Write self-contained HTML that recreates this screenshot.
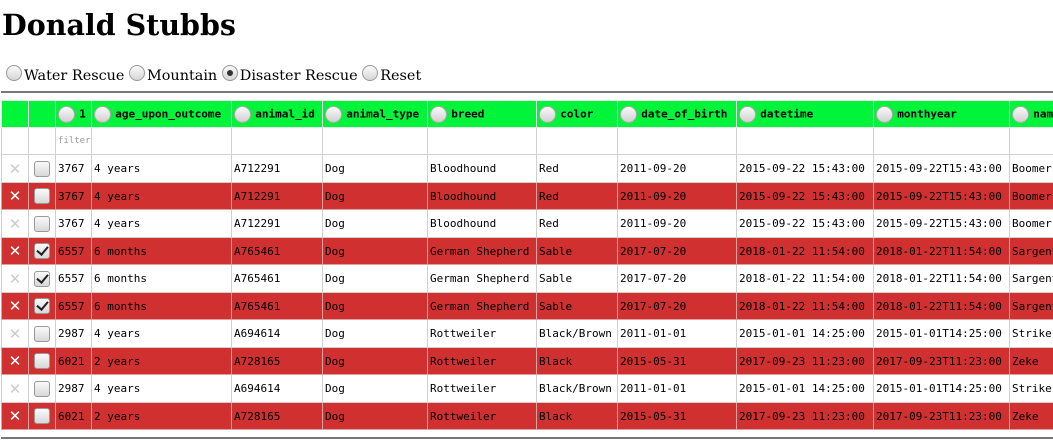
<!DOCTYPE html>
<html><head><style>
body{margin:0;background:#fff;width:1053px;height:447px;overflow:hidden;position:relative;font-family:"DejaVu Serif","Liberation Serif",serif}
h1{position:absolute;left:2px;top:8px;margin:0;font-size:28.5px;font-weight:bold;font-family:"DejaVu Serif",serif;color:#000}
.radios{position:absolute;left:6px;top:65px;font-size:14.4px;font-family:"DejaVu Serif",serif;white-space:nowrap}
.rb{display:inline-block;width:14px;height:14px;border-radius:50%;border:1px solid #999;background:linear-gradient(#fafafa,#d6d6d6);vertical-align:-1px;margin-right:2px;position:relative}
.rb.on::after{content:"";position:absolute;left:4px;top:4px;width:6px;height:6px;border-radius:50%;background:#333}
.hr{position:absolute;left:1px;width:1052px;height:2px;background:#777}
table{position:absolute;left:1px;top:100px;width:1068px;border-collapse:collapse;table-layout:fixed;font-family:"DejaVu Sans Mono","Liberation Mono",monospace;font-size:11px;color:#000}
td{border:1px solid #d0d0d0;padding:0 0 0 2px;white-space:nowrap;overflow:hidden;height:26px}
tr.h td{background:#00f53a;font-weight:bold;height:26px;border-color:#e8e8e8}
tr.r td{background:#d03030;border-color:#e0a0a0}
tr.a td{height:27px}
.x{color:#ccc;font-family:"DejaVu Sans",sans-serif;font-size:15px;text-align:center;padding:0}
tr.r .x{color:#fff}
.cb{display:inline-block;width:14px;height:14px;border:1px solid #999;border-radius:3px;background:linear-gradient(#fafafa,#d8d8d8);position:relative;vertical-align:middle}
.cb.on::after{content:"";position:absolute;left:4px;top:0px;width:5px;height:9px;border:solid #222;border-width:0 2.5px 2.5px 0;transform:rotate(40deg)}
.c{text-align:center;padding:0}
.hd .ci{display:inline-block;width:15px;height:15px;border-radius:50%;border:1px solid #aaa;background:linear-gradient(#fafafa,#d0d0d0);vertical-align:middle}
.hd .ar{color:#999;font-size:7px;vertical-align:4px}
.f{color:#999;font-size:9px}
</style></head><body>
<h1>Donald Stubbs</h1>
<div class="radios"><span class="rb"></span>Water Rescue <span class="rb"></span>Mountain <span class="rb on"></span>Disaster Rescue <span class="rb"></span>Reset</div>
<div class="hr" style="top:91px"></div>
<table>
<colgroup><col style="width:27px"><col style="width:27px"><col style="width:36px"><col style="width:140px"><col style="width:91px"><col style="width:105px"><col style="width:109px"><col style="width:81px"><col style="width:119px"><col style="width:137px"><col style="width:136px"><col style="width:60px"></colgroup>
<tr class="h hd"><td></td><td></td><td><span class="ci"></span><span class="ar">⬍</span>1</td><td><span class="ci"></span><span class="ar">⬍</span>age_upon_outcome</td><td><span class="ci"></span><span class="ar">⬍</span>animal_id</td><td><span class="ci"></span><span class="ar">⬍</span>animal_type</td><td><span class="ci"></span><span class="ar">⬍</span>breed</td><td><span class="ci"></span><span class="ar">⬍</span>color</td><td><span class="ci"></span><span class="ar">⬍</span>date_of_birth</td><td><span class="ci"></span><span class="ar">⬍</span>datetime</td><td><span class="ci"></span><span class="ar">⬍</span>monthyear</td><td><span class="ci"></span><span class="ar">⬍</span>name</td></tr>
<tr><td></td><td></td><td class="f">filter</td><td></td><td></td><td></td><td></td><td></td><td></td><td></td><td></td><td></td></tr>
<tr class="a"><td class="x">✕</td><td class="c"><span class="cb"></span></td><td>3767</td><td>4 years</td><td>A712291</td><td>Dog</td><td>Bloodhound</td><td>Red</td><td>2011-09-20</td><td>2015-09-22 15:43:00</td><td>2015-09-22T15:43:00</td><td>Boomer</td></tr>
<tr class="r"><td class="x">✕</td><td class="c"><span class="cb"></span></td><td>3767</td><td>4 years</td><td>A712291</td><td>Dog</td><td>Bloodhound</td><td>Red</td><td>2011-09-20</td><td>2015-09-22 15:43:00</td><td>2015-09-22T15:43:00</td><td>Boomer</td></tr>
<tr class="a"><td class="x">✕</td><td class="c"><span class="cb"></span></td><td>3767</td><td>4 years</td><td>A712291</td><td>Dog</td><td>Bloodhound</td><td>Red</td><td>2011-09-20</td><td>2015-09-22 15:43:00</td><td>2015-09-22T15:43:00</td><td>Boomer</td></tr>
<tr class="r"><td class="x">✕</td><td class="c"><span class="cb on"></span></td><td>6557</td><td>6 months</td><td>A765461</td><td>Dog</td><td>German Shepherd</td><td>Sable</td><td>2017-07-20</td><td>2018-01-22 11:54:00</td><td>2018-01-22T11:54:00</td><td>Sargent</td></tr>
<tr class="a"><td class="x">✕</td><td class="c"><span class="cb on"></span></td><td>6557</td><td>6 months</td><td>A765461</td><td>Dog</td><td>German Shepherd</td><td>Sable</td><td>2017-07-20</td><td>2018-01-22 11:54:00</td><td>2018-01-22T11:54:00</td><td>Sargent</td></tr>
<tr class="r"><td class="x">✕</td><td class="c"><span class="cb on"></span></td><td>6557</td><td>6 months</td><td>A765461</td><td>Dog</td><td>German Shepherd</td><td>Sable</td><td>2017-07-20</td><td>2018-01-22 11:54:00</td><td>2018-01-22T11:54:00</td><td>Sargent</td></tr>
<tr class="a"><td class="x">✕</td><td class="c"><span class="cb"></span></td><td>2987</td><td>4 years</td><td>A694614</td><td>Dog</td><td>Rottweiler</td><td>Black/Brown</td><td>2011-01-01</td><td>2015-01-01 14:25:00</td><td>2015-01-01T14:25:00</td><td>Striker</td></tr>
<tr class="r"><td class="x">✕</td><td class="c"><span class="cb"></span></td><td>6021</td><td>2 years</td><td>A728165</td><td>Dog</td><td>Rottweiler</td><td>Black</td><td>2015-05-31</td><td>2017-09-23 11:23:00</td><td>2017-09-23T11:23:00</td><td>Zeke</td></tr>
<tr class="a"><td class="x">✕</td><td class="c"><span class="cb"></span></td><td>2987</td><td>4 years</td><td>A694614</td><td>Dog</td><td>Rottweiler</td><td>Black/Brown</td><td>2011-01-01</td><td>2015-01-01 14:25:00</td><td>2015-01-01T14:25:00</td><td>Striker</td></tr>
<tr class="r"><td class="x">✕</td><td class="c"><span class="cb"></span></td><td>6021</td><td>2 years</td><td>A728165</td><td>Dog</td><td>Rottweiler</td><td>Black</td><td>2015-05-31</td><td>2017-09-23 11:23:00</td><td>2017-09-23T11:23:00</td><td>Zeke</td></tr>
</table>
<div class="hr" style="top:437px"></div>
</body></html>
